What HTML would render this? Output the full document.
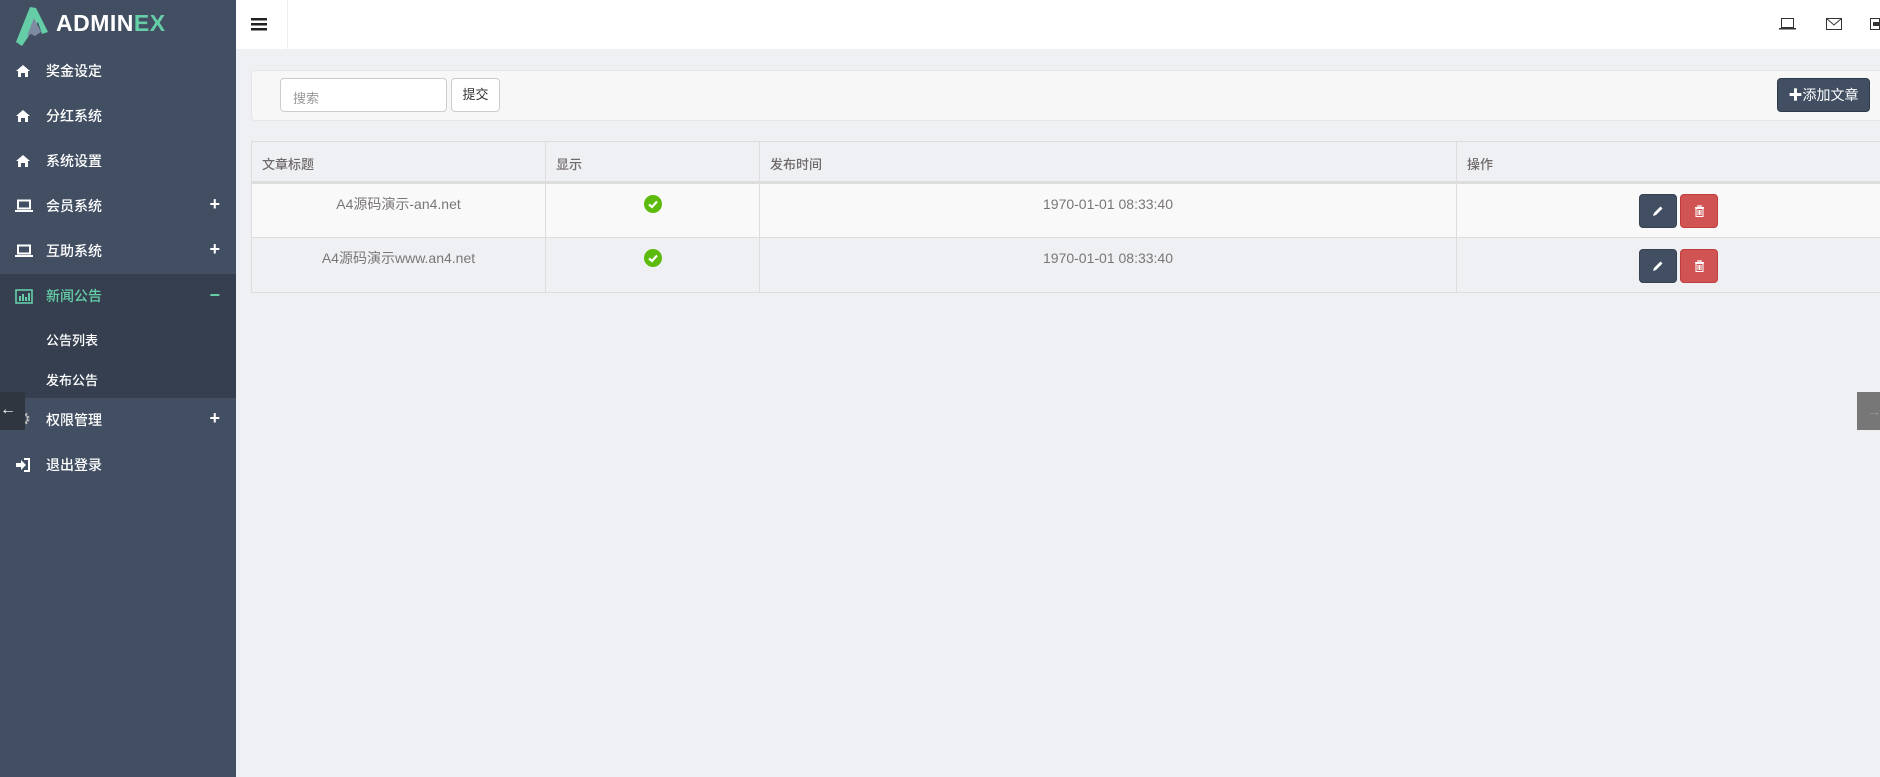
<!DOCTYPE html>
<html><head><meta charset="utf-8"><style>
*{margin:0;padding:0;box-sizing:border-box}
body{width:1880px;height:777px;overflow:hidden;background:#eff0f4;font-family:"Liberation Sans","Noto Sans CJK SC",sans-serif;font-size:14px;color:#7a7676;position:relative}
.side{position:absolute;left:0;top:0;width:236px;height:777px;background:#424f63}
.logo{position:absolute;left:14px;top:4px;height:40px}
.logo .t{position:absolute;left:42px;top:6px;font-size:23px;font-weight:bold;color:#fff;letter-spacing:0.5px}
.logo .t b{color:#65cea7}
.mi{position:absolute;left:0;width:236px;height:45px;color:#fff;font-size:14px;font-weight:500}
.mi span.l{position:absolute;left:46px;top:12px}
.mi .ic{position:absolute;left:15px;top:15px}
.mi .pl{position:absolute;right:16px;top:10px;font-size:18px;font-weight:bold}
.grp{position:absolute;left:0;top:274px;width:236px;height:124px;background:#353f4f}
.head{position:absolute;left:236px;top:0;width:1644px;height:49px;background:#fff}
.panel{position:absolute;left:251px;top:70px;width:1640px;height:51px;background:#f7f7f7;border:1px solid #e6e6e6;border-radius:4px}
.inp{position:absolute;left:280px;top:78px;width:167px;height:34px;background:#fff;border:1px solid #ccc;border-radius:4px;color:#999;font-size:13px;padding:9px 12px}
.btn{position:absolute;left:451px;top:78px;width:49px;height:34px;background:#fff;border:1px solid #ccc;border-radius:4px;color:#333;font-size:13px;text-align:center;line-height:32px}
.add{position:absolute;left:1777px;top:78px;width:93px;height:34px;background:#424f63;border:1px solid #2f3a4a;border-radius:4px;color:#fff;font-size:14px;text-align:center;line-height:32px}
table{position:absolute;left:251px;top:141px;width:1650px;border-collapse:collapse}
td,th{border:1px solid #ddd;vertical-align:top}
th{height:41px;text-align:left;padding:12px 10px 0;font-weight:500;color:#6f6a6a;font-size:13px;border-bottom:3px solid #ddd}
td{height:55px;text-align:center;padding-top:10px;line-height:20px}
tr.r1 td{background:#f9f9f9}
.ok{display:inline-block;width:18px;height:18px;position:relative;top:1px}
.eb,.db{display:inline-block;width:38px;height:34px;border-radius:4px;vertical-align:top;margin-top:0}
.eb{background:#424f63;border:1px solid #364152}
.db{background:#d05454;border:1px solid #c13c3c;margin-left:3px}
</style></head><body>
<div class="side">
 <div class="logo">
  <svg width="40" height="42" viewBox="0 0 40 42"><path d="M2 38 L16 3 L22 4 L34 28 L28 30 L24 18 L8 42 Z" fill="#65cea7"/><path d="M20 14 L27 28 L21 32 L17 30 L13 32 Z" fill="#7d8aa0"/></svg>
  <div class="t">ADMIN<b>EX</b></div>
 </div>
 <div class="grp"></div>
 <div class="mi" style="top:49px"><svg class="ic" width="16" height="14" viewBox="0 0 16 14"><path d="M8 1 L15 7 L13 7 L13 13 L10 13 L10 9 L6 9 L6 13 L3 13 L3 7 L1 7 Z" fill="#fff"/></svg><span class="l">奖金设定</span></div>
 <div class="mi" style="top:94px"><svg class="ic" width="16" height="14" viewBox="0 0 16 14"><path d="M8 1 L15 7 L13 7 L13 13 L10 13 L10 9 L6 9 L6 13 L3 13 L3 7 L1 7 Z" fill="#fff"/></svg><span class="l">分红系统</span></div>
 <div class="mi" style="top:139px"><svg class="ic" width="16" height="14" viewBox="0 0 16 14"><path d="M8 1 L15 7 L13 7 L13 13 L10 13 L10 9 L6 9 L6 13 L3 13 L3 7 L1 7 Z" fill="#fff"/></svg><span class="l">系统设置</span></div>
 <div class="mi" style="top:184px"><svg class="ic" width="18" height="14" viewBox="0 0 18 14"><rect x="3" y="1.5" width="12" height="8" fill="none" stroke="#fff" stroke-width="2"/><rect x="0" y="11" width="18" height="2" fill="#fff"/></svg><span class="l">会员系统</span><span class="pl">+</span></div>
 <div class="mi" style="top:229px"><svg class="ic" width="18" height="14" viewBox="0 0 18 14"><rect x="3" y="1.5" width="12" height="8" fill="none" stroke="#fff" stroke-width="2"/><rect x="0" y="11" width="18" height="2" fill="#fff"/></svg><span class="l">互助系统</span><span class="pl">+</span></div>
 <div class="mi" style="top:274px;color:#65cea7"><svg class="ic" width="18" height="15" viewBox="0 0 18 15"><rect x="1" y="1" width="16" height="13" fill="none" stroke="#65cea7" stroke-width="1.6"/><rect x="4" y="7" width="2" height="5" fill="#65cea7"/><rect x="7" y="5" width="2" height="7" fill="#65cea7"/><rect x="10" y="8" width="2" height="4" fill="#65cea7"/><rect x="13" y="4" width="2" height="8" fill="#65cea7"/></svg><span class="l">新闻公告</span><span class="pl" style="top:11px">−</span></div>
 <div class="mi" style="top:326px;font-size:13px"><span class="l" style="top:4px">公告列表</span></div>
 <div class="mi" style="top:366px;font-size:13px"><span class="l" style="top:4px">发布公告</span></div>
 <div class="mi" style="top:398px"><span style="position:absolute;left:15px;top:11px;font-size:18px;color:#bbb">⚙</span><span class="l">权限管理</span><span class="pl">+</span></div>
 <div class="mi" style="top:443px"><svg class="ic" width="16" height="14" viewBox="0 0 16 14"><path d="M1 5 L6 5 L6 2 L11 7 L6 12 L6 9 L1 9 Z" fill="#fff"/><path d="M9 1 L14 1 L14 13 L9 13" fill="none" stroke="#fff" stroke-width="2"/></svg><span class="l">退出登录</span></div>
 <div style="position:absolute;left:0;top:392px;width:25px;height:38px;background:#2f3640;color:#fff;font-size:16px;line-height:36px">←</div>
</div>
<div class="head">
 <svg style="position:absolute;left:15px;top:18px" width="16" height="13" viewBox="0 0 16 13"><rect y="0" width="16" height="2.5" fill="#222"/><rect y="5" width="16" height="2.5" fill="#222"/><rect y="10" width="16" height="2.5" fill="#222"/></svg>
 <div style="position:absolute;left:51px;top:0;width:1px;height:49px;background:#eee"></div>
 <svg style="position:absolute;left:1543px;top:18px" width="17" height="12" viewBox="0 0 17 12"><rect x="2.5" y="0.5" width="12" height="9" fill="none" stroke="#333"/><rect x="0" y="10" width="17" height="1.5" fill="#333"/></svg>
 <svg style="position:absolute;left:1590px;top:18px" width="16" height="12" viewBox="0 0 16 12"><rect x="0.5" y="0.5" width="15" height="11" fill="none" stroke="#333"/><path d="M0.5 0.5 L8 7 L15.5 0.5" fill="none" stroke="#333"/></svg>
 <svg style="position:absolute;left:1634px;top:18px" width="10" height="12" viewBox="0 0 10 12"><rect x="0.5" y="0.5" width="9" height="11" fill="none" stroke="#333"/><rect x="3" y="4" width="7" height="4" fill="#333"/></svg>
</div>
<div class="panel"></div>
<div class="inp">搜索</div>
<div class="btn">提交</div>
<div class="add"><b>✚</b>添加文章</div>
<table>
<tr><th style="width:294px">文章标题</th><th style="width:214px">显示</th><th style="width:697px">发布时间</th><th>操作</th></tr>
<tr class="r1"><td>A4源码演示-an4.net</td><td><svg class="ok" viewBox="0 0 18 18"><circle cx="9" cy="9" r="9" fill="#5cbb0c"/><path d="M5 9.5 L8 12 L13 6.5" fill="none" stroke="#fff" stroke-width="2.2"/></svg></td><td>1970-01-01 08:33:40</td><td></td></tr>
<tr><td>A4源码演示www.an4.net</td><td><svg class="ok" viewBox="0 0 18 18"><circle cx="9" cy="9" r="9" fill="#5cbb0c"/><path d="M5 9.5 L8 12 L13 6.5" fill="none" stroke="#fff" stroke-width="2.2"/></svg></td><td>1970-01-01 08:33:40</td><td></td></tr>
</table>
<div style="position:absolute;left:1639px;top:194px"><span class="eb"></span><span class="db"></span></div>
<div style="position:absolute;left:1639px;top:249px"><span class="eb"></span><span class="db"></span></div>
<svg style="position:absolute;left:1652px;top:205px" width="12" height="12" viewBox="0 0 12 12"><path d="M1 11 L2 8 L8.5 1.5 L10.5 3.5 L4 10 Z" fill="#fff"/></svg>
<svg style="position:absolute;left:1652px;top:260px" width="12" height="12" viewBox="0 0 12 12"><path d="M1 11 L2 8 L8.5 1.5 L10.5 3.5 L4 10 Z" fill="#fff"/></svg>
<svg style="position:absolute;left:1694px;top:205px" width="11" height="12" viewBox="0 0 11 12"><rect x="1" y="2" width="9" height="1.5" fill="#fff"/><rect x="4" y="0" width="3" height="2" fill="none" stroke="#fff"/><rect x="2" y="3.5" width="7" height="8" fill="none" stroke="#fff"/><path d="M4 5 V10 M5.5 5 V10 M7 5 V10" stroke="#fff"/></svg>
<svg style="position:absolute;left:1694px;top:260px" width="11" height="12" viewBox="0 0 11 12"><rect x="1" y="2" width="9" height="1.5" fill="#fff"/><rect x="4" y="0" width="3" height="2" fill="none" stroke="#fff"/><rect x="2" y="3.5" width="7" height="8" fill="none" stroke="#fff"/><path d="M4 5 V10 M5.5 5 V10 M7 5 V10" stroke="#fff"/></svg>
<div style="position:absolute;left:1857px;top:392px;width:23px;height:38px;background:#777;color:#999;line-height:38px;padding-left:10px">→</div>
</body></html>
